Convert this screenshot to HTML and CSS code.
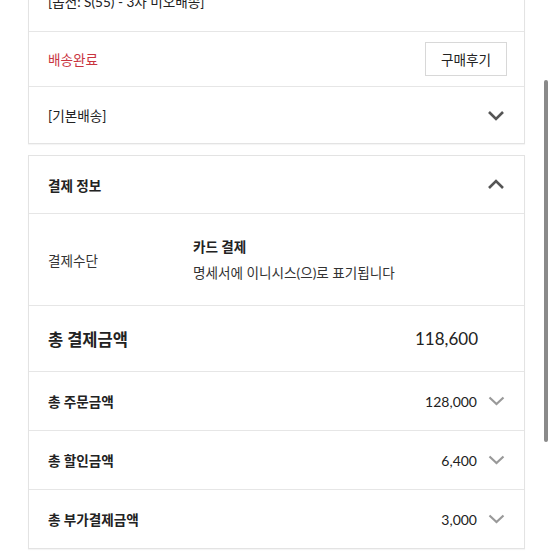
FILE: index.html
```html
<!DOCTYPE html>
<html lang="ko">
<head>
    <meta charset="UTF-8">
    <meta name="viewport" content="width=device-width, initial-scale=1.0">
    <title>주문 상세</title>
    <link rel="stylesheet" href="styles.css">
</head>
<body>
    <div class="page">
        <!-- 배송 정보 -->
        <div class="card card-top">
            <div class="row row-option">
                <span class="option">[옵션: S(55) - 3차 미오배송]</span>
            </div>
            <div class="row row-status">
                <span class="status">배송완료</span>
                <button class="btn">구매후기</button>
            </div>
            <div class="row row-ship">
                <span>[기본배송]</span>
                <svg class="chev" width="18" height="11" viewBox="0 0 18 11"><polyline points="2,2 9,9 16,2"/></svg>
            </div>
        </div>

        <!-- 결제 정보 -->
        <div class="card">
            <div class="row row-head">
                <span class="title">결제 정보</span>
                <svg class="chev" width="18" height="11" viewBox="0 0 18 11"><polyline points="2,9 9,2 16,9"/></svg>
            </div>
            <div class="row row-method">
                <span class="label">결제수단</span>
                <div class="method">
                    <div class="method-name">카드 결제</div>
                    <div class="method-desc">명세서에 이니시스(으)로 표기됩니다</div>
                </div>
            </div>
            <div class="row row-total">
                <span class="title-lg">총 결제금액</span>
                <span class="amount-lg">118,600</span>
            </div>
            <div class="row row-sum">
                <span class="title">총 주문금액</span>
                <div class="sum">
                    <span class="amount">128,000</span>
                    <svg class="chev-sm" width="17" height="10" viewBox="0 0 17 10"><polyline points="1.5,1.5 8.5,8 15.5,1.5"/></svg>
                </div>
            </div>
            <div class="row row-sum">
                <span class="title">총 할인금액</span>
                <div class="sum">
                    <span class="amount">6,400</span>
                    <svg class="chev-sm" width="17" height="10" viewBox="0 0 17 10"><polyline points="1.5,1.5 8.5,8 15.5,1.5"/></svg>
                </div>
            </div>
            <div class="row row-sum">
                <span class="title">총 부가결제금액</span>
                <div class="sum">
                    <span class="amount">3,000</span>
                    <svg class="chev-sm" width="17" height="10" viewBox="0 0 17 10"><polyline points="1.5,1.5 8.5,8 15.5,1.5"/></svg>
                </div>
            </div>
        </div>
    </div>
    <div class="scrollbar"></div>
</body>
</html>
```

FILE: styles.css
```css
html, body {
    margin: 0;
    height: 100%;
    overflow: hidden;
    background-color: #fff;
}
body {
    font-family: "Lato", "Noto Sans CJK KR", sans-serif;
    font-size: 13.6px;
    color: #222;
}
.page {
    padding-left: 28px;
    width: 497px;
}
.card {
    border: 1px solid #e3e3e3;
    background-color: #fff;
    margin-top: 11px;
    box-shadow: 0 1px 1px rgba(0, 0, 0, 0.04);
}
.card-top {
    margin-top: -30px;
}
.row {
    display: flex;
    align-items: center;
    justify-content: space-between;
    padding: 0 19px;
    box-sizing: border-box;
    border-top: 1px solid #e6e6e6;
}
.row:first-child {
    border-top: none;
}
.row-option { height: 60px; }
.row-status { height: 55px; }
.row-ship { height: 57px; }
.row-head { height: 57px; }
.row-method {
    height: 92px;
    justify-content: flex-start;
}
.row-total { height: 66px; }
.row-sum { height: 59px; }

.status {
    color: #c9343f;
}
.btn {
    font-family: inherit;
    font-size: 13.6px;
    color: #222;
    background-color: #fff;
    border: 1px solid #d8d8d8;
    height: 34px;
    width: 82px;
    padding: 0;
    margin-right: -2px;
    cursor: pointer;
}
.chev polyline {
    fill: none;
    stroke: #555;
    stroke-width: 2.6;
}
.chev-sm polyline {
    fill: none;
    stroke: #999;
    stroke-width: 2.2;
}
.title {
    font-weight: bold;
}
.label {
    width: 145px;
    color: #333;
}
.method-name {
    font-weight: bold;
    line-height: 20px;
}
.method-desc {
    line-height: 20px;
    margin-top: 6px;
    color: #333;
}
.title-lg {
    font-size: 16.5px;
    font-weight: bold;
}
.amount-lg {
    font-size: 17px;
    margin-right: 27px;
}
.sum {
    display: flex;
    align-items: center;
    gap: 11px;
}
.amount {
    font-size: 14px;
}
.scrollbar {
    position: absolute;
    left: 544px;
    top: 80px;
    width: 4px;
    height: 362px;
    border-radius: 2px;
    background-color: #8a8a8a;
}
```
